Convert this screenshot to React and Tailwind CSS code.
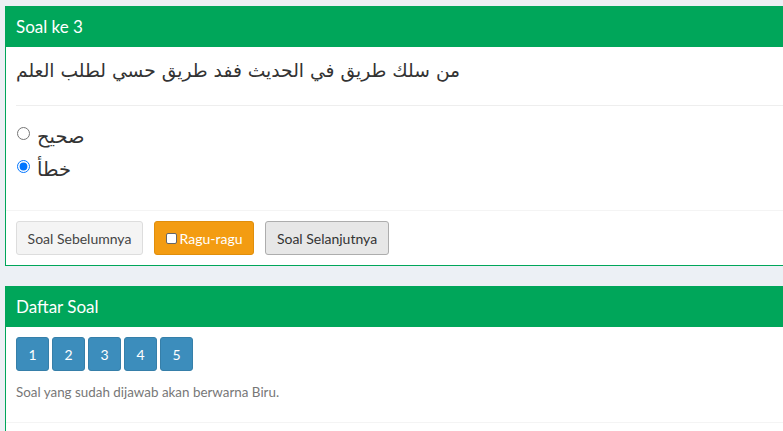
import React from "react";

const font = { fontFamily: '"Lato", "DejaVu Sans", sans-serif' };
const ar = { fontFamily: '"DejaVu Sans", sans-serif' };

export default function App() {
  return (
    <div className="w-[783px] h-[431px] overflow-hidden bg-[#ecf0f5]" style={font}>
      <div className="pl-[5px] pt-[6px] w-[820px]">
        {/* Box 1 */}
        <div className="border border-[#00a65a] bg-white">
          <div className="h-[40px] bg-[#00a65a] px-[10px] flex items-center text-white text-[17px]">
            Soal ke 3
          </div>
          <div className="px-[10px] pt-[10px]">
            <div className="h-[32px] leading-[28px] text-[18.7px] text-[#333] mb-[16px]" style={ar}>
              <span dir="rtl">من سلك طريق في الحديث ففد طريق حسي لطلب العلم</span>
            </div>
            <div className="h-px bg-[#eee]" />
            <div className="pt-[14px] pb-[24px] text-[19.5px] text-[#333]" style={ar}>
              <label className="h-[33px] flex items-center">
                <input type="radio" name="opt" className="w-[13px] h-[13px] ml-px mr-[7px] -mt-[6px]" readOnly />
                <span dir="rtl">صحيح</span>
              </label>
              <label className="h-[33px] flex items-center">
                <input type="radio" name="opt" className="w-[13px] h-[13px] ml-px mr-[7px] -mt-[6px]" defaultChecked />
                <span dir="rtl">خطأ</span>
              </label>
            </div>
          </div>
          <div className="border-t border-[#f4f4f4] px-[10px] py-[10px] flex gap-[11px] text-[14px]">
            <button className="w-[127px] h-[34px] rounded-[3px] bg-[#f4f4f4] border border-[#ddd] text-[#444]">
              Soal Sebelumnya
            </button>
            <button className="w-[100px] h-[34px] rounded-[3px] bg-[#f39c12] border border-[#e08e0b] text-white flex items-center justify-center gap-[3px]">
              <span className="inline-block w-[11px] h-[11px] bg-white border border-[#666] rounded-[2px]" />
              Ragu-ragu
            </button>
            <button className="w-[124px] h-[34px] rounded-[3px] bg-[#e7e7e7] border border-[#adadad] text-[#333]">
              Soal Selanjutnya
            </button>
          </div>
        </div>

        {/* Box 2 */}
        <div className="mt-[20px] border border-[#00a65a] bg-white">
          <div className="h-[40px] bg-[#00a65a] px-[10px] flex items-center text-white text-[17px]">
            Daftar Soal
          </div>
          <div className="px-[10px] pt-[10px] pb-[21px]">
            <div className="flex gap-[3px]">
              {[1, 2, 3, 4, 5].map((n) => (
                <div
                  key={n}
                  className="w-[33px] h-[34px] rounded-[3px] bg-[#3c8dbc] border border-[#367fa9] text-white text-[14px] flex items-center justify-center"
                >
                  {n}
                </div>
              ))}
            </div>
            <div className="mt-[12px] text-[13.4px] text-[#777] leading-[18px]">
              Soal yang sudah dijawab akan berwarna Biru.
            </div>
          </div>
          <div className="border-t border-[#f4f4f4] h-[40px]" />
        </div>
      </div>
    </div>
  );
}
